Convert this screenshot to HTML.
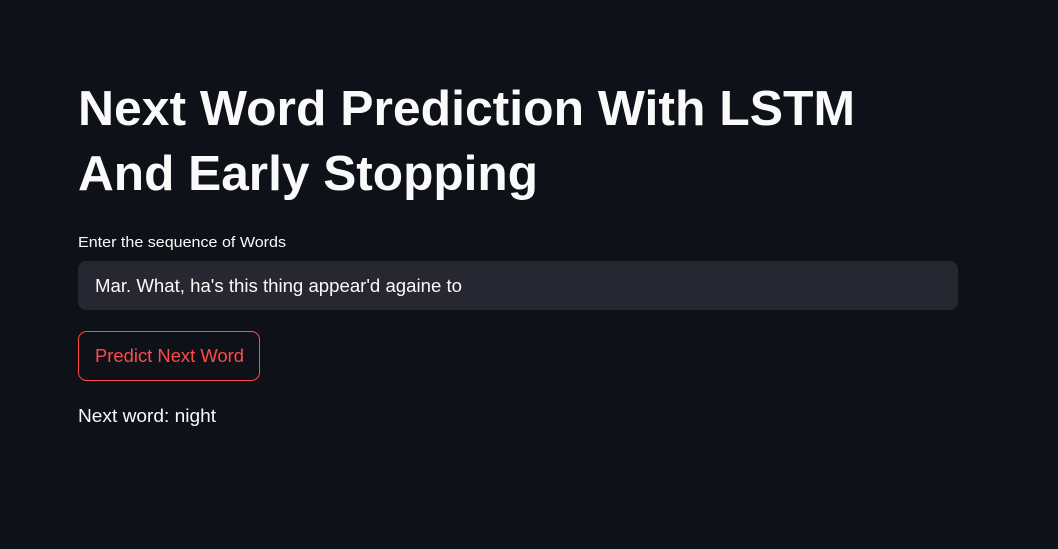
<!DOCTYPE html>
<html><head><meta charset="utf-8"><style>
html,body{margin:0;padding:0;background:#0e1117;width:1058px;height:549px;overflow:hidden}
svg{display:block}
</style></head><body>
<svg width="1058" height="549" xmlns="http://www.w3.org/2000/svg" font-family="Liberation Sans, sans-serif">
<rect width="1058" height="549" fill="#0e1117"/>
<text x="78" y="125" font-size="49" font-weight="bold" fill="#fafafa" textLength="777" lengthAdjust="spacingAndGlyphs">Next Word Prediction With LSTM</text>
<text x="78" y="190" font-size="49" font-weight="bold" fill="#fafafa" textLength="460" lengthAdjust="spacingAndGlyphs">And Early Stopping</text>
<text x="78" y="247" font-size="15" fill="#fafafa" textLength="208" lengthAdjust="spacingAndGlyphs">Enter the sequence of Words</text>
<rect x="78" y="261" width="880" height="49" rx="8" fill="#262730"/>
<text x="95" y="292" font-size="18" fill="#fafafa" textLength="367" lengthAdjust="spacingAndGlyphs">Mar. What, ha's this thing appear'd againe to</text>
<rect x="78.5" y="331.5" width="181" height="49" rx="8" fill="#0e1117" stroke="#ff4b4b" stroke-width="1"/>
<text x="95" y="362" font-size="18" fill="#ff4b4b" textLength="149" lengthAdjust="spacingAndGlyphs">Predict Next Word</text>
<text x="78" y="422" font-size="18" fill="#fafafa" textLength="138" lengthAdjust="spacingAndGlyphs">Next word: night</text>
</svg>
</body></html>
